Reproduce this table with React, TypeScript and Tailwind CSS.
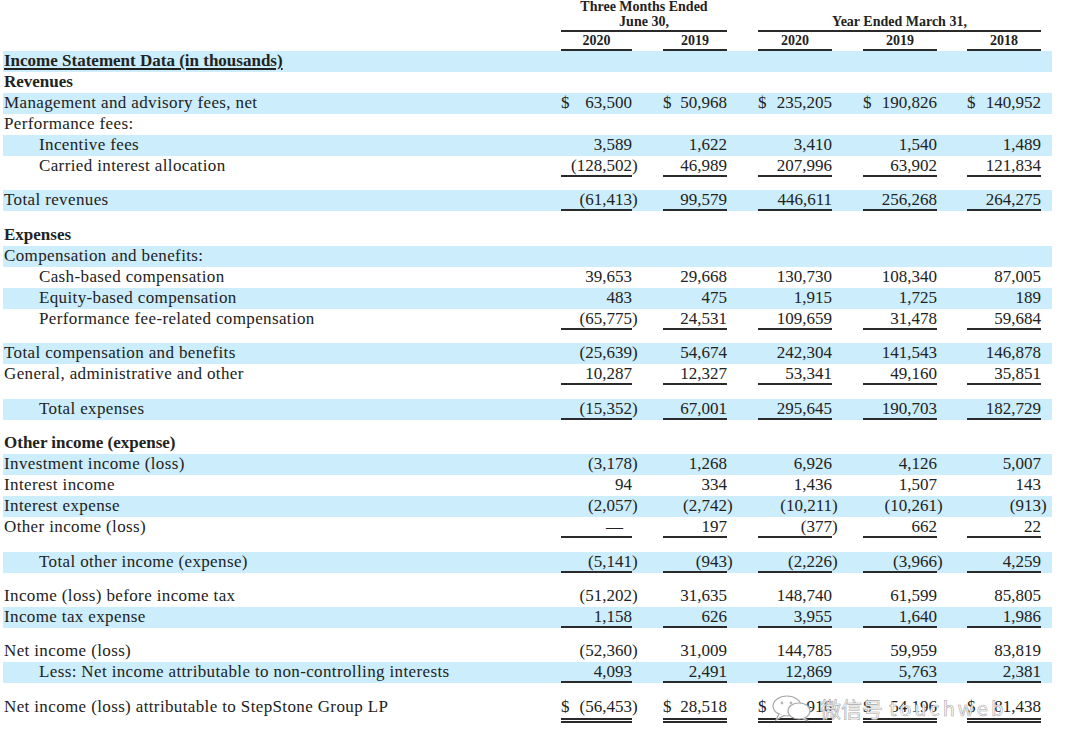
import React from 'react';

type Row =
  | { kind: 'spacer'; h: string }
  | {
      kind: 'row';
      label: string;
      vals?: string[];
      shaded?: boolean;
      bold?: boolean;
      head?: boolean;
      indent?: boolean;
      line?: boolean;
      double?: boolean;
      dollar?: boolean;
    };

const rows: Row[] = [
  { kind: 'row', label: 'Income Statement Data (in thousands)', head: true, bold: true, shaded: true },
  { kind: 'row', label: 'Revenues', bold: true },
  { kind: 'row', label: 'Management and advisory fees, net', shaded: true, dollar: true, vals: ['63,500', '50,968', '235,205', '190,826', '140,952'] },
  { kind: 'row', label: 'Performance fees:' },
  { kind: 'row', label: 'Incentive fees', indent: true, shaded: true, vals: ['3,589', '1,622', '3,410', '1,540', '1,489'] },
  { kind: 'row', label: 'Carried interest allocation', indent: true, line: true, vals: ['(128,502)', '46,989', '207,996', '63,902', '121,834'] },
  { kind: 'spacer', h: 'h-[13px]' },
  { kind: 'row', label: 'Total revenues', shaded: true, line: true, vals: ['(61,413)', '99,579', '446,611', '256,268', '264,275'] },
  { kind: 'spacer', h: 'h-[14px]' },
  { kind: 'row', label: 'Expenses', bold: true },
  { kind: 'row', label: 'Compensation and benefits:', shaded: true },
  { kind: 'row', label: 'Cash-based compensation', indent: true, vals: ['39,653', '29,668', '130,730', '108,340', '87,005'] },
  { kind: 'row', label: 'Equity-based compensation', indent: true, shaded: true, vals: ['483', '475', '1,915', '1,725', '189'] },
  { kind: 'row', label: 'Performance fee-related compensation', indent: true, line: true, vals: ['(65,775)', '24,531', '109,659', '31,478', '59,684'] },
  { kind: 'spacer', h: 'h-[13px]' },
  { kind: 'row', label: 'Total compensation and benefits', shaded: true, vals: ['(25,639)', '54,674', '242,304', '141,543', '146,878'] },
  { kind: 'row', label: 'General, administrative and other', line: true, vals: ['10,287', '12,327', '53,341', '49,160', '35,851'] },
  { kind: 'spacer', h: 'h-[14px]' },
  { kind: 'row', label: 'Total expenses', indent: true, shaded: true, line: true, vals: ['(15,352)', '67,001', '295,645', '190,703', '182,729'] },
  { kind: 'spacer', h: 'h-[13px]' },
  { kind: 'row', label: 'Other income (expense)', bold: true },
  { kind: 'row', label: 'Investment income (loss)', shaded: true, vals: ['(3,178)', '1,268', '6,926', '4,126', '5,007'] },
  { kind: 'row', label: 'Interest income', vals: ['94', '334', '1,436', '1,507', '143'] },
  { kind: 'row', label: 'Interest expense', shaded: true, vals: ['(2,057)', '(2,742)', '(10,211)', '(10,261)', '(913)'] },
  { kind: 'row', label: 'Other income (loss)', line: true, vals: ['—', '197', '(377)', '662', '22'] },
  { kind: 'spacer', h: 'h-[14px]' },
  { kind: 'row', label: 'Total other income (expense)', indent: true, shaded: true, line: true, vals: ['(5,141)', '(943)', '(2,226)', '(3,966)', '4,259'] },
  { kind: 'spacer', h: 'h-[13px]' },
  { kind: 'row', label: 'Income (loss) before income tax', vals: ['(51,202)', '31,635', '148,740', '61,599', '85,805'] },
  { kind: 'row', label: 'Income tax expense', shaded: true, line: true, vals: ['1,158', '626', '3,955', '1,640', '1,986'] },
  { kind: 'spacer', h: 'h-[13px]' },
  { kind: 'row', label: 'Net income (loss)', vals: ['(52,360)', '31,009', '144,785', '59,959', '83,819'] },
  { kind: 'row', label: 'Less: Net income attributable to non-controlling interests', indent: true, shaded: true, line: true, vals: ['4,093', '2,491', '12,869', '5,763', '2,381'] },
  { kind: 'spacer', h: 'h-[14px]' },
  { kind: 'row', label: 'Net income (loss) attributable to StepStone Group LP', double: true, dollar: true, vals: ['(56,453)', '28,518', '131,916', '54,196', '81,438'] },
];

const cols = ['w-[71px]', 'ml-[31px] w-[64px]', 'ml-[31px] w-[74px]', 'ml-[31px] w-[74px]', 'ml-[30px] w-[74px]'];

function Amount({ v }: { v: string }) {
  if (v === '—') return <span className="pr-[9px]">—</span>;
  if (v.startsWith('(')) {
    return (
      <span>
        {v.slice(0, -1)}
        <span className="inline-block w-0">)</span>
      </span>
    );
  }
  return <span>{v}</span>;
}

export default function App() {
  return (
    <div className="relative w-[1080px] h-[753px] overflow-hidden bg-white text-[#222] font-['Liberation_Serif','Times_New_Roman',serif]">
      <div className="ml-[3px] w-[1049px] -mt-[2px]">
        {/* column headings */}
        <div className="flex h-[15px] text-[14px] font-bold leading-[17px]">
          <div className="w-[558px]" />
          <div className="w-[166px] text-center">Three Months Ended</div>
        </div>
        <div className="flex h-[19px] text-[14px] font-bold leading-[17px]">
          <div className="w-[558px]" />
          <div className="w-[166px] border-b-2 border-[#2a2a2a] text-center">June 30,</div>
          <div className="ml-[31px] w-[283px] border-b-2 border-[#2a2a2a] text-center">Year Ended March 31,</div>
        </div>
        <div className="flex h-[19px] text-[14px] font-bold leading-[17px]">
          <div className="w-[558px]" />
          {['2020', '2019', '2020', '2019', '2018'].map((y, i) => (
            <div key={i} className={`${cols[i]} border-b-2 border-[#2a2a2a] text-center`}>
              {y}
            </div>
          ))}
        </div>

        {rows.map((r, i) => {
          if (r.kind === 'spacer') return <div key={i} className={r.h} />;
          return (
            <div
              key={i}
              className={`flex ${r.double ? 'h-[26px]' : 'h-[21px]'} text-[17px] leading-[20px] whitespace-nowrap ${
                r.shaded ? 'bg-[#ccedfb]' : ''
              }`}
            >
              <div
                className={`w-[558px] pl-[1px] ${r.indent ? 'pl-[36px]' : ''} ${
                  r.bold ? 'font-bold' : 'tracking-[0.37px]'
                } ${r.head ? 'underline decoration-[1.5px] underline-offset-[2px]' : ''}`}
              >
                {r.label}
              </div>
              {r.vals &&
                r.vals.map((v, j) => (
                  <div
                    key={j}
                    className={`${cols[j]} flex justify-between ${
                      r.double
                        ? 'border-b-[5px] border-double border-[#2a2a2a]'
                        : r.line
                        ? 'border-b-2 border-[#2a2a2a]'
                        : ''
                    }`}
                  >
                    <span>{r.dollar ? '$' : ''}</span>
                    <Amount v={v} />
                  </div>
                ))}
            </div>
          );
        })}
      </div>

      {/* watermark */}
      <div className="absolute left-[770px] top-[694px] flex items-center gap-[6px] text-white [-webkit-text-stroke:0.6px_#a8a8a8] font-['Noto_Sans_CJK_SC','Noto_Sans',sans-serif]">
        <svg width="44" height="28" viewBox="0 0 44 28" fill="white" stroke="#a8a8a8" strokeWidth="1.2">
          <ellipse cx="17" cy="12" rx="14" ry="10" />
          <path d="M9 20 L6 26 L14 21.5" />
          <ellipse cx="29" cy="17" rx="11" ry="8" />
          <path d="M35 24 L38 27 L32 24.5" />
          <circle cx="12" cy="9" r="1.4" fill="#b8b8b8" stroke="none" />
          <circle cx="21" cy="9" r="1.4" fill="#b8b8b8" stroke="none" />
        </svg>
        <span className="text-[21px] leading-[26px]">微信号</span>
        <span className="text-[20px] leading-[26px] tracking-[3px]">touchweb</span>
      </div>
    </div>
  );
}
